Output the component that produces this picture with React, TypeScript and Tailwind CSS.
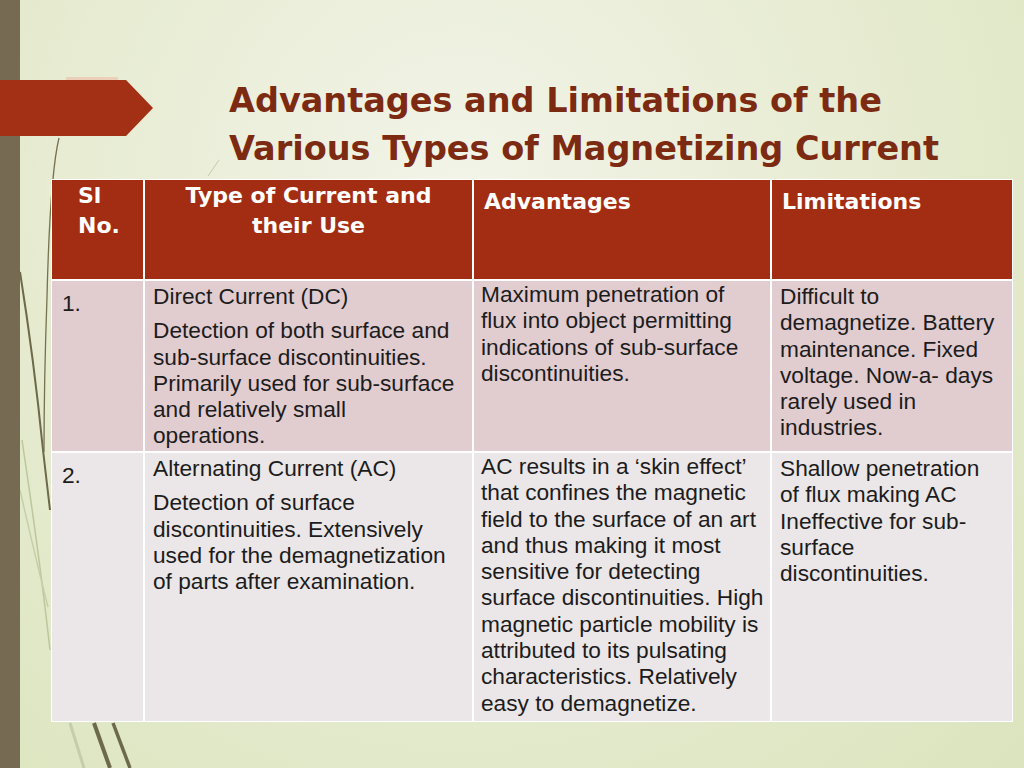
import React from "react";

type Row = {
  no: string;
  type: { title: string; lines: string[] };
  adv: string[];
  lim: string[];
  bg: string;
};

const rows: Row[] = [
  {
    no: "1.",
    type: {
      title: "Direct Current (DC)",
      lines: [
        "Detection of both surface and",
        "sub-surface discontinuities.",
        "Primarily used for sub-surface",
        "and relatively small",
        "operations.",
      ],
    },
    adv: [
      "Maximum penetration of",
      "flux into object permitting",
      "indications of sub-surface",
      "discontinuities.",
    ],
    lim: [
      "Difficult to",
      "demagnetize. Battery",
      "maintenance. Fixed",
      "voltage. Now-a- days",
      "rarely used in",
      "industries.",
    ],
    bg: "bg-[#e1ccd0]",
  },
  {
    no: "2.",
    type: {
      title: "Alternating Current (AC)",
      lines: [
        "Detection of surface",
        "discontinuities. Extensively",
        "used for the demagnetization",
        "of parts after examination.",
      ],
    },
    adv: [
      "AC results in a \u2018skin effect\u2019",
      "that confines the magnetic",
      "field to the surface of an art",
      "and thus making it most",
      "sensitive for detecting",
      "surface discontinuities. High",
      "magnetic particle mobility is",
      "attributed to its pulsating",
      "characteristics. Relatively",
      "easy to demagnetize.",
    ],
    lim: [
      "Shallow penetration",
      "of flux making AC",
      "Ineffective for sub-",
      "surface",
      "discontinuities.",
    ],
    bg: "bg-[#ebe6e7]",
  },
];

const Lines = ({ lines }: { lines: string[] }) => (
  <>
    {lines.map((l) => (
      <div key={l} className="whitespace-nowrap">
        {l}
      </div>
    ))}
  </>
);

// grass-like stems drawn behind the slide content
const Decor = () => (
  <svg
    className="absolute inset-0 pointer-events-none"
    width="1024"
    height="768"
    viewBox="0 0 1024 768"
  >
    <path d="M59 138 Q50 175 47 297 Q44 380 44 452" fill="none" stroke="#76714f" strokeWidth="1.3" />
    <path d="M20 272 Q34 360 43 450 L50 510" fill="none" stroke="#6d6a4a" strokeWidth="2" />
    <path d="M22 440 Q40 560 50 650" fill="none" stroke="#bcc79c" strokeWidth="1.5" />
    <path d="M20 490 Q36 560 48 607" fill="none" stroke="#c6cfa8" strokeWidth="1.5" />
    <line x1="70" y1="723" x2="84" y2="768" stroke="#c5cea8" strokeWidth="3" />
    <line x1="94" y1="723" x2="110" y2="768" stroke="#6d6a4c" strokeWidth="4" />
    <line x1="113" y1="723" x2="130" y2="768" stroke="#6d6a4c" strokeWidth="3.5" />
    <line x1="219" y1="160" x2="208" y2="176" stroke="#c3cbae" strokeWidth="1" />
  </svg>
);

const heading = { fontFamily: "'DejaVu Sans', Verdana, sans-serif" };

export default function App() {
  return (
    <div
      className="relative w-[1024px] h-[768px] overflow-hidden bg-[radial-gradient(ellipse_at_45%_25%,#f2f4e8_0%,#e6ebd0_55%,#dbe4bd_100%)]"
      style={{ fontFamily: "'Liberation Sans', Arial, sans-serif" }}
    >
      <Decor />
      {/* left band */}
      <div className="absolute left-0 top-0 h-full w-[20px] bg-[#766a52]" />
      {/* arrow */}
      <svg className="absolute left-0 top-[76px]" width="156" height="62" viewBox="0 0 156 62">
        <rect x="66" y="1" width="52" height="3" fill="#eec3ad" opacity="0.7" />
        <polygon points="0,4 126,4 153,32 126,60 0,60" fill="#a32f14" />
      </svg>

      <div className="relative flex flex-col pl-[51px] pt-[77px]">
        {/* title */}
        <div
          className="pl-[178px] text-[33.5px] leading-[48px] font-bold text-[#7d2a12]"
          style={heading}
        >
          <div>Advantages and Limitations of the</div>
          <div>Various Types of Magnetizing Current</div>
        </div>

        {/* table */}
        <div className="mt-[6px] w-[962px] grid grid-cols-[91px_327px_296px_240px] gap-[2px] bg-white p-[1px] text-[22.7px] leading-[26.3px] text-[#1c1c1c]">
          {/* header */}
          <div className="contents text-white font-bold text-[22px] leading-[30px]" style={heading}>
            <div className="h-[99px] bg-[#a32d12] pl-[26px] pt-[1px]">
              <div>Sl</div>
              <div>No.</div>
            </div>
            <div className="bg-[#a32d12] pt-[1px] text-center">
              <div>Type of Current and</div>
              <div>their Use</div>
            </div>
            <div className="bg-[#a32d12] pl-[10px] pt-[7px]">Advantages</div>
            <div className="bg-[#a32d12] pl-[10px] pt-[7px]">Limitations</div>
          </div>

          {rows.map((r, i) => (
            <React.Fragment key={r.no}>
              <div className={`${r.bg} pl-[10px] pt-[9px] ${i === 0 ? "h-[170px]" : "h-[268px]"}`}>
                {r.no}
              </div>
              <div className={`${r.bg} pl-[8px] pt-[2px]`}>
                <div className="mb-[8px]">{r.type.title}</div>
                <Lines lines={r.type.lines} />
              </div>
              <div className={`${r.bg} pl-[7px] pt-0`}>
                <Lines lines={r.adv} />
              </div>
              <div className={`${r.bg} pl-[8px] pt-[2px]`}>
                <Lines lines={r.lim} />
              </div>
            </React.Fragment>
          ))}
        </div>
      </div>
    </div>
  );
}
